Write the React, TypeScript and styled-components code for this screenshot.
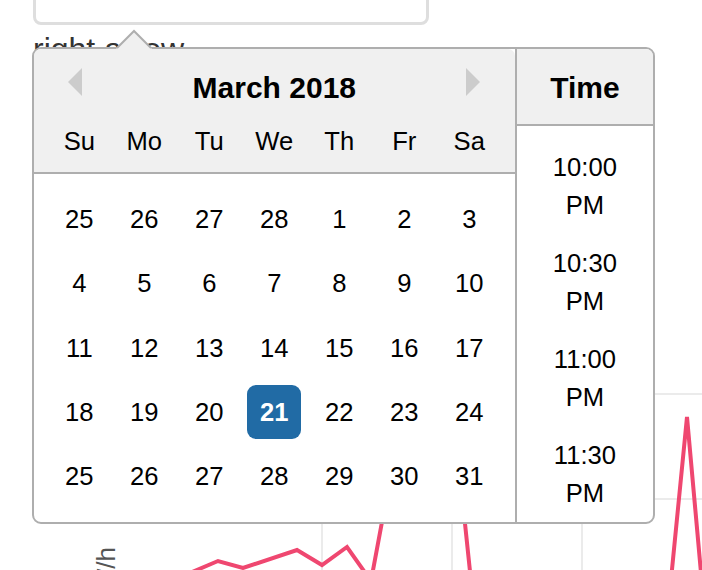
import React from "react";
import styled, { createGlobalStyle } from "styled-components";

const GlobalStyle = createGlobalStyle`
  html, body { margin: 0; padding: 0; background: #fff; }
  body { font-family: "Liberation Sans", Arial, Helvetica, sans-serif; overflow: hidden; }
  * { box-sizing: border-box; }
`;

const Page = styled.div`
  position: relative;
  width: 702px;
  height: 570px;
  overflow: hidden;
  background: #fff;
`;

const DateInput = styled.input`
  display: block;
  margin: -40px 0 0 33px;
  width: 396px;
  height: 65px;
  border: 3px solid #dedede;
  border-radius: 8px;
  background: #fff;
  outline: none;
`;

const Label = styled.div`
  margin: 6px 0 0 33px;
  font-size: 32px;
  line-height: 36px;
  color: #333;
`;

const Chart = styled.svg`
  display: block;
`;

const Popover = styled.div`
  position: absolute;
  left: 32px;
  top: 47px;
  display: flex;
  background: #fff;
  border: 2px solid #aeaeae;
  border-radius: 9px;
  font-size: 25.6px;
  color: #000;
`;

const Triangle = styled.svg`
  position: absolute;
  left: 82px;
  top: -20px;
`;

const Nav = styled.span<{ $side: "prev" | "next" }>`
  position: absolute;
  top: 19px;
  left: ${(p) => (p.$side === "prev" ? "34px" : "432px")};
  width: 0;
  height: 0;
  border-top: 14.5px solid transparent;
  border-bottom: 14.5px solid transparent;
  ${(p) =>
    p.$side === "prev"
      ? "border-right: 14px solid #ccc;"
      : "border-left: 14px solid #ccc;"}
`;

const MonthContainer = styled.div`
  width: 480.6px;
  flex-shrink: 0;
`;

const MonthHeader = styled.div`
  background: #f0f0f0;
  border-bottom: 2px solid #aeaeae;
  border-top-left-radius: 7px;
  border-top-right-radius: 7px;
  padding-top: 18px;
  text-align: center;
`;

const Title = styled.div`
  font-weight: bold;
  font-size: 30px;
  line-height: 42px;
`;

const Row = styled.div`
  display: flex;
  justify-content: center;
`;

const DayName = styled.div`
  width: 54.4px;
  line-height: 54px;
  margin: 5px 5.3px 4px;
  text-align: center;
`;

const Month = styled.div`
  margin: 12.8px;
`;

const Day = styled.div<{ $selected?: boolean }>`
  width: 54.4px;
  height: 54px;
  line-height: 54px;
  margin: 5.2px 5.3px;
  text-align: center;
  border-radius: 9px;
  background: ${(p) => (p.$selected ? "#216ba5" : "transparent")};
  color: ${(p) => (p.$selected ? "#fff" : "#000")};
  font-weight: ${(p) => (p.$selected ? "bold" : "normal")};
`;

const TimeContainer = styled.div`
  width: 138.6px;
  flex-shrink: 0;
  border-left: 2px solid #aeaeae;
  display: flex;
  flex-direction: column;
  overflow: hidden;
`;

const TimeHeader = styled.div`
  height: 77px;
  background: #f0f0f0;
  border-bottom: 2px solid #aeaeae;
  border-top-right-radius: 7px;
  padding-top: 18px;
  text-align: center;
  font-weight: bold;
  font-size: 30px;
  line-height: 42px;
`;

const TimeList = styled.div`
  flex: 1;
  height: 0;
  overflow: hidden;
  padding-top: 12px;
`;

const TimeItem = styled.div`
  padding: 10px 20px;
  line-height: 38px;
  text-align: center;
`;

const dayNames = ["Su", "Mo", "Tu", "We", "Th", "Fr", "Sa"];
const weeks = [
  [25, 26, 27, 28, 1, 2, 3],
  [4, 5, 6, 7, 8, 9, 10],
  [11, 12, 13, 14, 15, 16, 17],
  [18, 19, 20, 21, 22, 23, 24],
  [25, 26, 27, 28, 29, 30, 31],
];
const times = ["10:00 PM", "10:30 PM", "11:00 PM", "11:30 PM"];

const linePoints =
  "150,590 218,561 243,568 297,550 322,565 347,547 371,581 435,237 473,600 560,605 669,600 687,417 703,595";

export default function App() {
  return (
    <Page>
      <GlobalStyle />
      <DateInput readOnly />
      <Label>right arrow</Label>
      <Chart width={702} height={503} viewBox="0 67 702 503">
        <g stroke="#ebebeb" strokeWidth={2}>
          <line x1={322} y1={300} x2={322} y2={570} />
          <line x1={452} y1={300} x2={452} y2={570} />
          <line x1={582} y1={300} x2={582} y2={570} />
          <line x1={120} y1={394} x2={702} y2={394} />
          <line x1={120} y1={499} x2={702} y2={499} />
        </g>
        <polyline
          points={linePoints}
          fill="none"
          stroke="#ef4770"
          strokeWidth={4}
          strokeLinejoin="miter"
        />
        <text
          x={115}
          y={547}
          transform="rotate(-90 115 547)"
          textAnchor="end"
          fontSize={26}
          fill="#555"
          fontFamily="Liberation Sans, Arial, sans-serif"
        >
          kW/h
        </text>
      </Chart>

      <Popover>
        <Triangle width={36} height={22} viewBox="0 0 36 22">
          <polygon points="0,20 18,2 36,20" fill="#f0f0f0" />
          <polyline
            points="1,19 18,2 35,19"
            fill="none"
            stroke="#aeaeae"
            strokeWidth={2}
          />
        </Triangle>
        <Nav $side="prev" />
        <Nav $side="next" />
        <MonthContainer>
          <MonthHeader>
            <Title>March 2018</Title>
            <Row>
              {dayNames.map((d) => (
                <DayName key={d}>{d}</DayName>
              ))}
            </Row>
          </MonthHeader>
          <Month>
            {weeks.map((w, i) => (
              <Row key={i}>
                {w.map((d, j) => (
                  <Day key={j} $selected={i === 3 && d === 21}>
                    {d}
                  </Day>
                ))}
              </Row>
            ))}
          </Month>
        </MonthContainer>
        <TimeContainer>
          <TimeHeader>Time</TimeHeader>
          <TimeList>
            {times.map((t) => (
              <TimeItem key={t}>{t}</TimeItem>
            ))}
          </TimeList>
        </TimeContainer>
      </Popover>
    </Page>
  );
}
